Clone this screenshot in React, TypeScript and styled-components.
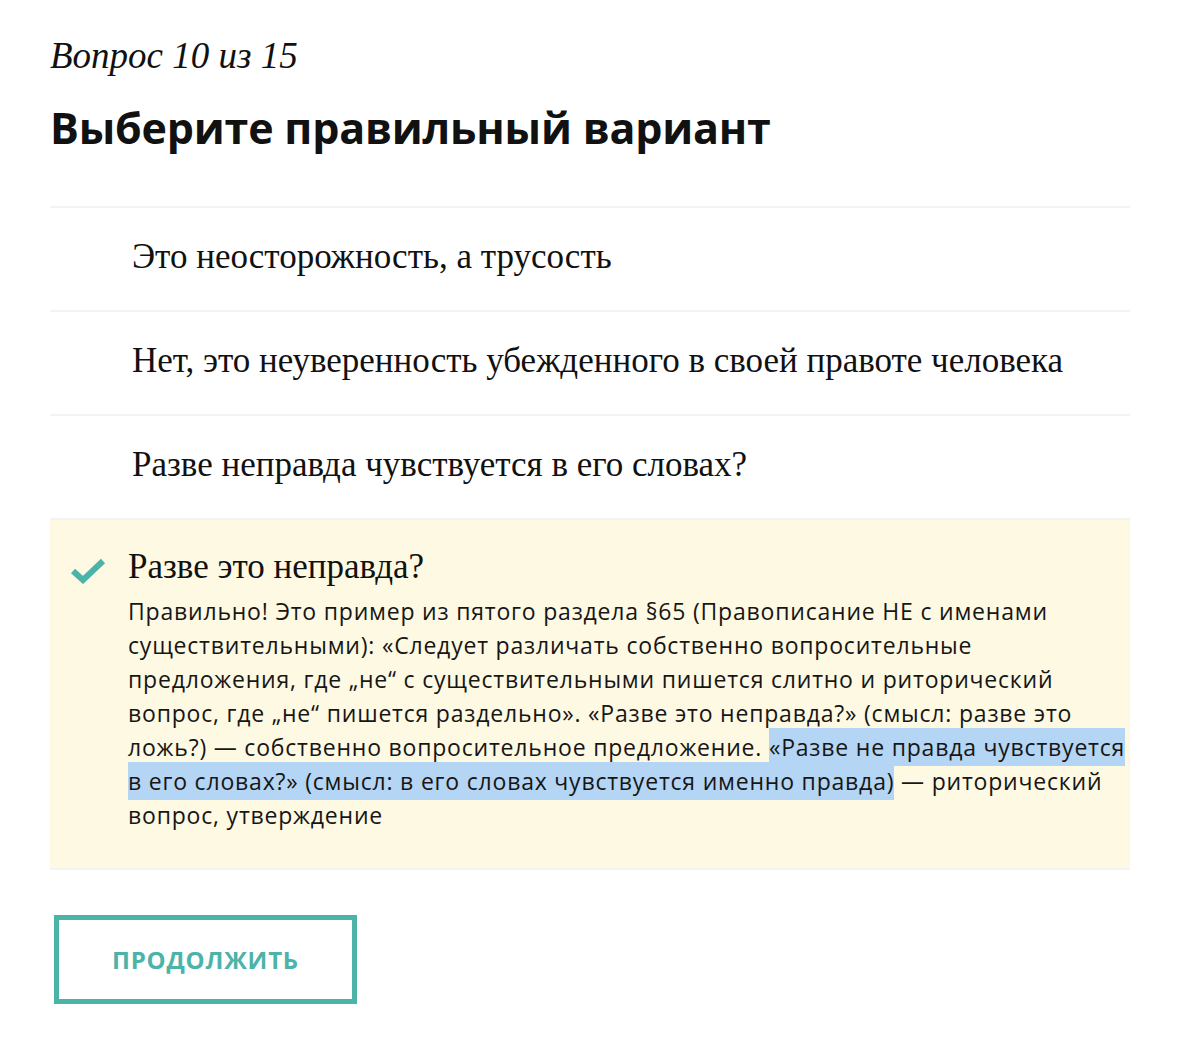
import React from "react";
import styled, { createGlobalStyle } from "styled-components";

const GlobalStyle = createGlobalStyle`
  body {
    margin: 0;
    background: #ffffff;
    color: #111111;
  }
`;

const options = [
  "Это неосторожность, а трусость",
  "Нет, это неуверенность убежденного в своей правоте человека",
  "Разве неправда чувствуется в его словах?",
];

const App = () => {
  return (
    <React.Fragment>
      <GlobalStyle />
      <Page>
        <Counter>Вопрос 10 из 15</Counter>
        <Title>Выберите правильный вариант</Title>
        <List>
          {options.map((text) => (
            <Option key={text}>{text}</Option>
          ))}
          <Answer>
            <CheckIcon viewBox="0 0 36 26">
              <path
                d="M3 13 L13 22 L33 3"
                fill="none"
                stroke="#4cb3a9"
                strokeWidth="6"
              />
            </CheckIcon>
            <AnswerBody>
              <AnswerTitle>Разве это неправда?</AnswerTitle>
              <Explanation>
                Правильно! Это пример из пятого раздела §65 (Правописание НЕ с
                именами существительными): «Следует различать собственно
                вопросительные предложения, где „не“ с существительными пишется
                слитно и риторический вопрос, где „не“ пишется раздельно».
                «Разве это неправда?» (смысл: разве это ложь?) — собственно
                вопросительное предложение.{" "}
                <Marked>
                  «Разве не правда чувствуется в его словах?» (смысл: в его
                  словах чувствуется именно правда)
                </Marked>{" "}
                — риторический вопрос, утверждение
              </Explanation>
            </AnswerBody>
          </Answer>
        </List>
        <NextButton>Продолжить</NextButton>
      </Page>
    </React.Fragment>
  );
};

const Page = styled.div`
  width: 1080px;
  padding: 34px 0 40px 50px;
`;

const Counter = styled.div`
  font-family: "Liberation Serif", "DejaVu Serif", serif;
  font-style: italic;
  font-size: 37px;
  line-height: 44px;
`;

const Title = styled.h1`
  margin: 24px 0 52px;
  font-family: "Open Sans", Lato, sans-serif;
  font-weight: 700;
  font-size: 43px;
  line-height: 52px;
  letter-spacing: -0.2px;
`;

const List = styled.div`
  border-top: 2px solid #f3f3f3;
`;

const Option = styled.div`
  box-sizing: border-box;
  padding: 0 0 5px 82px;
  height: 104px;
  display: flex;
  align-items: center;
  border-bottom: 2px solid #f3f3f3;
  font-family: "Liberation Serif", "DejaVu Serif", serif;
  font-size: 35px;
`;

const Answer = styled.div`
  display: flex;
  align-items: flex-start;
  gap: 22px;
  background: #fef9e3;
  padding: 28px 0 36px 20px;
  border-bottom: 2px solid #f3f3f3;
`;

const CheckIcon = styled.svg`
  width: 36px;
  height: 26px;
  margin-top: 10px;
  flex-shrink: 0;
`;

const AnswerBody = styled.div`
  flex: 1;
`;

const AnswerTitle = styled.div`
  font-family: "Liberation Serif", "DejaVu Serif", serif;
  font-size: 35px;
  line-height: 38px;
  margin-bottom: 8px;
`;

const Explanation = styled.p`
  margin: 0;
  font-family: "Open Sans", Lato, sans-serif;
  font-size: 23px;
  line-height: 34px;
  letter-spacing: 0.8px;
  color: #161616;
`;

const Marked = styled.span`
  background: #b4d5f4;
  padding: 3px 0;
`;

const NextButton = styled.button`
  display: block;
  margin: 45px 0 0 4px;
  width: 303px;
  height: 89px;
  border: 5px solid #4cb3a9;
  background: #ffffff;
  color: #4cb3a9;
  font-family: "Open Sans", Lato, sans-serif;
  font-weight: 700;
  font-size: 24px;
  text-transform: uppercase;
  letter-spacing: 0.8px;
  cursor: pointer;
`;

export default App;
